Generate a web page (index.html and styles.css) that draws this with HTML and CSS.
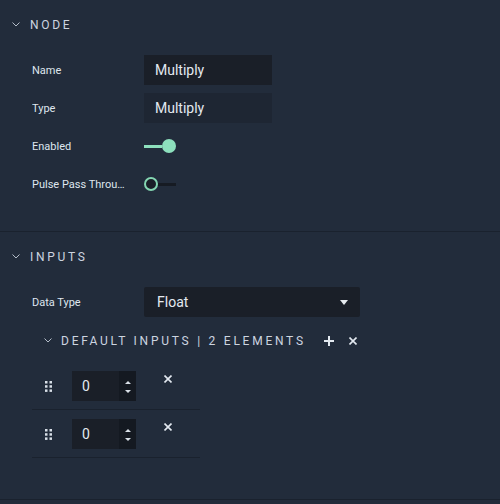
FILE: index.html
```html
<!DOCTYPE html>
<html lang="en">
<head>
    <meta charset="UTF-8">
    <title>Node Inspector</title>
    <link rel="stylesheet" href="styles.css">
</head>
<body>
    <div class="section">
        <div class="section-head">
            <svg class="chevron" width="8" height="5" viewBox="0 0 8 5"><path d="M0.5 0.5 L4 4 L7.5 0.5" /></svg>
            <span>NODE</span>
        </div>
        <div class="rows">
            <div class="row">
                <div class="label">Name</div>
                <div class="field">Multiply</div>
            </div>
            <div class="row">
                <div class="label">Type</div>
                <div class="field readonly">Multiply</div>
            </div>
            <div class="row">
                <div class="label">Enabled</div>
                <div class="toggle on"><span class="track"></span><span class="knob"></span></div>
            </div>
            <div class="row">
                <div class="label">Pulse Pass Through</div>
                <div class="toggle"><span class="knob"></span><span class="track"></span></div>
            </div>
        </div>
    </div>

    <div class="section last">
        <div class="section-head">
            <svg class="chevron" width="8" height="5" viewBox="0 0 8 5"><path d="M0.5 0.5 L4 4 L7.5 0.5" /></svg>
            <span>INPUTS</span>
        </div>
        <div class="rows">
            <div class="row">
                <div class="label">Data Type</div>
                <div class="select">
                    <span>Float</span>
                    <svg width="8" height="5" viewBox="0 0 8 5"><path d="M0 0 H8 L4 5 Z" fill="#e6ebf0" /></svg>
                </div>
            </div>
            <div class="list-head">
                <svg class="chevron" width="8" height="5" viewBox="0 0 8 5"><path d="M0.5 0.5 L4 4 L7.5 0.5" /></svg>
                <span class="list-title">DEFAULT INPUTS | 2 ELEMENTS</span>
                <svg class="plus" width="10" height="10" viewBox="0 0 10 10"><path d="M5 0 V10 M0 5 H10" /></svg>
                <svg class="cross" width="8" height="8" viewBox="0 0 8 8"><path d="M0.5 0.5 L7.5 7.5 M7.5 0.5 L0.5 7.5" /></svg>
            </div>
            <div class="list">
                <div class="item">
                    <svg class="grip" width="7" height="11" viewBox="0 0 7 11">
                        <rect x="0" y="0" width="2.5" height="2.5" /><rect x="4.5" y="0" width="2.5" height="2.5" />
                        <rect x="0" y="4.2" width="2.5" height="2.5" /><rect x="4.5" y="4.2" width="2.5" height="2.5" />
                        <rect x="0" y="8.4" width="2.5" height="2.5" /><rect x="4.5" y="8.4" width="2.5" height="2.5" />
                    </svg>
                    <div class="number">
                        <span class="value">0</span>
                        <div class="spin">
                            <svg width="6" height="3" viewBox="0 0 6 3"><path d="M0 3 L3 0 L6 3 Z" /></svg>
                            <svg width="6" height="3" viewBox="0 0 6 3"><path d="M0 0 L3 3 L6 0 Z" /></svg>
                        </div>
                    </div>
                    <svg class="remove" width="8" height="8" viewBox="0 0 8 8"><path d="M0.5 0.5 L7.5 7.5 M7.5 0.5 L0.5 7.5" /></svg>
                </div>
                <div class="item">
                    <svg class="grip" width="7" height="11" viewBox="0 0 7 11">
                        <rect x="0" y="0" width="2.5" height="2.5" /><rect x="4.5" y="0" width="2.5" height="2.5" />
                        <rect x="0" y="4.2" width="2.5" height="2.5" /><rect x="4.5" y="4.2" width="2.5" height="2.5" />
                        <rect x="0" y="8.4" width="2.5" height="2.5" /><rect x="4.5" y="8.4" width="2.5" height="2.5" />
                    </svg>
                    <div class="number">
                        <span class="value">0</span>
                        <div class="spin">
                            <svg width="6" height="3" viewBox="0 0 6 3"><path d="M0 3 L3 0 L6 3 Z" /></svg>
                            <svg width="6" height="3" viewBox="0 0 6 3"><path d="M0 0 L3 3 L6 0 Z" /></svg>
                        </div>
                    </div>
                    <svg class="remove" width="8" height="8" viewBox="0 0 8 8"><path d="M0.5 0.5 L7.5 7.5 M7.5 0.5 L0.5 7.5" /></svg>
                </div>
            </div>
        </div>
    </div>
</body>
</html>
```

FILE: styles.css
```css
body { margin: 0; background: #222c3b; font-family: Roboto, "Liberation Sans", sans-serif; color: #dde4ec; height: 504px; overflow: hidden; }

.section { border-bottom: 1px solid #1a222e; padding-bottom: 32px; }
.section.last { padding-bottom: 41px; }

.section-head { height: 48px; box-sizing: border-box; padding: 1px 0 0 12px; display: flex; align-items: center; }
.section-head span { margin-left: 10px; font-size: 12px; letter-spacing: 2.7px; color: #cdd5e0; }
.chevron path { fill: none; stroke: #b4bdc9; stroke-width: 1; }

.rows { padding-top: 7px; display: flex; flex-direction: column; gap: 8px; }
.row { height: 30px; display: flex; align-items: center; padding-left: 32px; }
.label { width: 96px; margin-right: 16px; font-size: 11px; white-space: nowrap; overflow: hidden; text-overflow: ellipsis; color: #dfe6ee; }

.field { width: 117px; height: 30px; padding-left: 11px; line-height: 30px; background: #1a1f28; font-size: 14px; color: #e3e9f0; }
.field.readonly { background: #1e2633; }

.toggle { width: 32px; height: 14px; display: flex; align-items: center; }
.toggle .track { height: 3px; flex: 1; background: #161b23; }
.toggle .knob { width: 10px; height: 10px; border-radius: 50%; border: 2px solid #84d6b2; background: #1a1f28; }
.toggle.on .track { background: #8de0bd; }
.toggle.on .knob { width: 14px; height: 14px; border: 0; background: #8de0bd; }

.select { width: 216px; height: 30px; box-sizing: border-box; padding: 0 12px 0 13px; border-radius: 2px; background: #1a1f28; display: flex; align-items: center; justify-content: space-between; font-size: 14px; color: #e3e9f0; }

.list-head { height: 30px; box-sizing: border-box; padding: 1px 0 0 44px; display: flex; align-items: center; }
.list-title { margin-left: 9px; font-size: 12px; letter-spacing: 2.75px; color: #cdd5e0; }
.plus { margin-left: 18px; }
.plus path { stroke: #e3e9f0; stroke-width: 2; }
.cross { margin-left: 15px; }
.cross path, .remove path { stroke: #e3e9f0; stroke-width: 1.6; }

.list { margin-top: -1px; padding-left: 32px; }
.item { width: 168px; height: 48px; box-sizing: border-box; border-bottom: 1px solid #1a222e; display: flex; align-items: flex-start; padding-top: 9px; }
.grip { margin: 10px 0 0 13px; fill: #d8dfe7; }
.number { margin-left: 20px; width: 64px; height: 30px; display: flex; background: #1a1f28; }
.number .value { flex: 1; padding-left: 10px; line-height: 30px; font-size: 14px; color: #e3e9f0; }
.spin { width: 17px; background: #141921; display: flex; flex-direction: column; align-items: center; justify-content: space-between; padding: 10px 0 8px; box-sizing: border-box; }
.spin path { fill: #d8dfe7; }
.remove { margin: 4px 0 0 28px; }
```
